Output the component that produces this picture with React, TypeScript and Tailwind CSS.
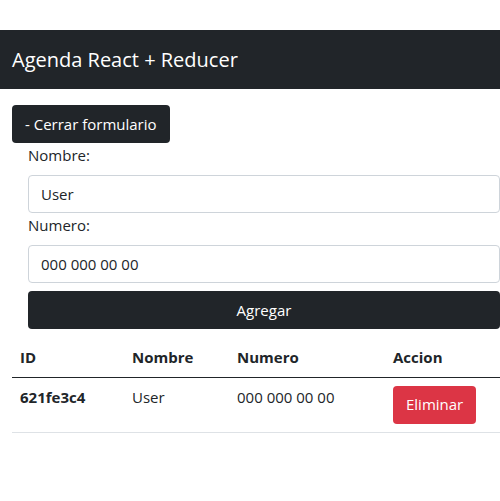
import React from "react";

const font = { fontFamily: '"Open Sans", "Liberation Sans", sans-serif' };

const contacts = [{ id: "621fe3c4", nombre: "User", numero: "000 000 00 00" }];

export default function App() {
  return (
    <div className="w-[500px] h-[501px] overflow-hidden bg-white text-[#212529] font-['Open_Sans',sans-serif]">
      <div className="h-[30px]" />
      {/* navbar */}
      <nav className="h-[59px] bg-[#212529] flex items-center px-3">
        <span className="text-white text-[20px] leading-[30px]">Agenda React + Reducer</span>
      </nav>

      <div className="px-3 pt-4">
        <button className="h-[38px] px-[13px] rounded bg-[#212529] text-white text-[15px] leading-6">
          - Cerrar formulario
        </button>

        <form className="pl-4 flex flex-col w-[488px]">
          <label className="text-[15px] leading-6 text-[#212529]">Nombre:</label>
          <input
            className="mt-2 h-[38px] w-[472px] border border-[#ced4da] rounded px-3 text-[15px] outline-none"
            defaultValue="User"
            style={font}
          />
          <label className="text-[15px] leading-6">Numero:</label>
          <input
            className="mt-2 h-[38px] w-[472px] border border-[#ced4da] rounded px-3 text-[15px] outline-none"
            defaultValue="000 000 00 00"
            style={font}
          />
          <button
            type="button"
            className="mt-2 h-[38px] w-[472px] rounded bg-[#212529] text-white text-[15px]"
          >
            Agregar
          </button>
        </form>

        <table className="mt-2 w-[488px] border-collapse text-[15px] text-left">
          <thead>
            <tr className="border-b border-[#212529]">
              <th className="w-[112px] px-2 h-10 font-bold">ID</th>
              <th className="w-[105px] px-2 font-bold">Nombre</th>
              <th className="w-[156px] px-2 font-bold">Numero</th>
              <th className="px-2 font-bold">Accion</th>
            </tr>
          </thead>
          <tbody>
            {contacts.map((c) => (
              <tr key={c.id} className="border-b border-[#dee2e6] align-top">
                <td className="px-2 py-2 font-bold">{c.id}</td>
                <td className="px-2 py-2">{c.nombre}</td>
                <td className="px-2 py-2">{c.numero}</td>
                <td className="px-2 py-2">
                  <button className="h-[38px] px-[13px] rounded bg-[#dc3545] text-white">Eliminar</button>
                </td>
              </tr>
            ))}
          </tbody>
        </table>
      </div>
    </div>
  );
}
